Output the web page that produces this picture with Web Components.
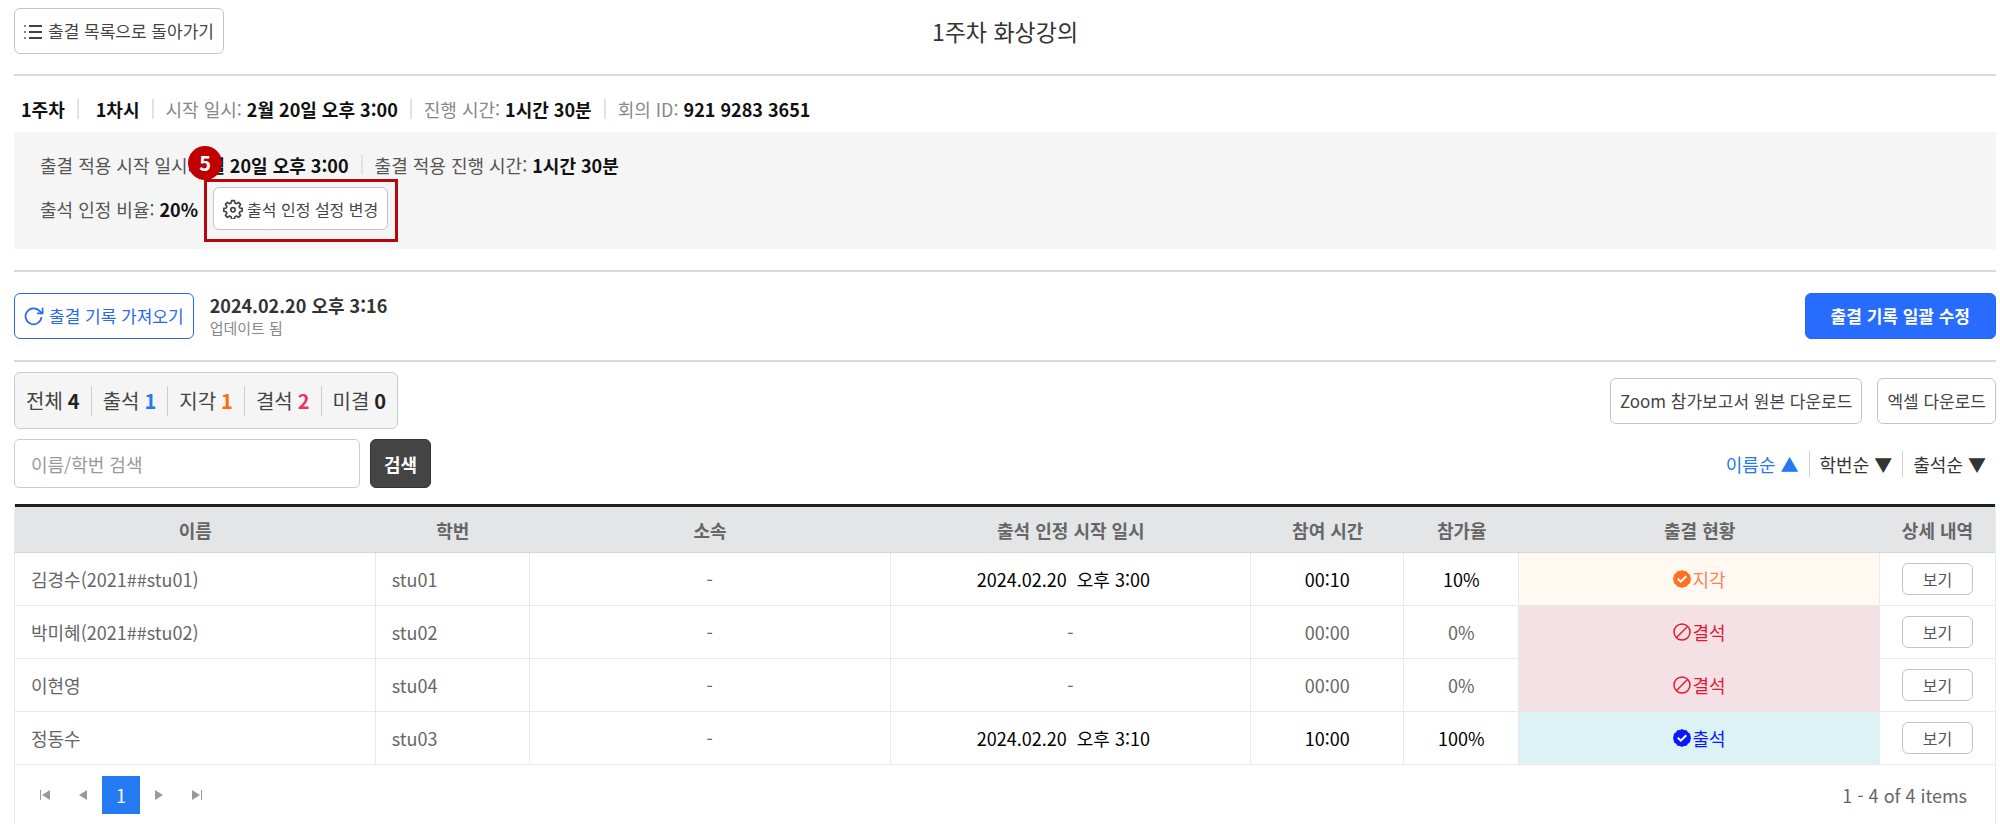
<!DOCTYPE html>
<html lang="ko">
<head>
<meta charset="utf-8">
<meta name="viewport" content="width=device-width, initial-scale=1">
<title>1주차 화상강의</title>
<style>
  body { margin: 0; background: #fff; color: #333; font-family: "Noto Sans CJK KR", sans-serif; font-size: 18px; line-height: 26px; }
</style>
</head>
<body>
<attendance-page></attendance-page>

<script>
const define = (name, html, setup) => {
  const template = document.createElement('template');
  template.innerHTML = html;
  customElements.define(name, class extends HTMLElement {
    constructor() {
      super();
      this.attachShadow({ mode: 'open' }).appendChild(template.content.cloneNode(true));
    }
    connectedCallback() { if (setup) setup(this, this.shadowRoot); }
  });
};

/* Icons, chosen by name */
const ICONS = {
  list: '<svg width="18" height="18" viewBox="0 0 18 18" fill="none" stroke="#444" stroke-width="2"><path d="M5 4h13M5 10h13M5 16h13"/><path stroke="#888" d="M0 4h2M0 10h2M0 16h2"/></svg>',
  gear: '<svg width="20" height="20" viewBox="0 0 24 24" fill="none" stroke="#444" stroke-width="2" stroke-linejoin="round"><path d="M10.3 2h3.4l.6 2.9 1.9.8 2.5-1.7 2.4 2.4-1.7 2.5.8 1.9 2.8.5v3.4l-2.8.6-.8 1.9 1.7 2.5-2.4 2.4-2.5-1.7-1.9.8-.6 2.8h-3.4l-.6-2.8-1.9-.8-2.5 1.7-2.4-2.4 1.7-2.5-.8-1.9L1 14.700V11.300l2.800-.5.8-1.9-1.700-2.500L5.300 4l2.500 1.700 1.900-.8z"/><circle cx="12" cy="13" r="2.600"/></svg>',
  refresh: '<svg width="20" height="20" viewBox="0 0 20 20" fill="none" stroke="#2a68f0" stroke-width="1.700"><path d="M17.500 11.200A8 8 0 1 1 15.700 5.200L18 7.200"/><path d="M18.600 1.800v5.600h-5.600"/></svg>',
  check: '<svg width="18" height="18" viewBox="0 0 18 18"><path fill="currentColor" d="M9 0l2 1 2.500.3L15 3.200l2 1.600.4 2.200.6 2-.6 2-.4 2.200-2 1.600-1.500 1.900L11 17l-2 1-2-1-2.500-.3L3 14.800l-2-1.600L.600 11 0 9l.6-2L1 4.800l2-1.600 1.500-1.900L7 1z"/><path fill="none" stroke="#fff" stroke-width="2" d="M4.800 8.700l3 3 5.500-5.500"/></svg>',
  ban: '<svg width="18" height="18" viewBox="0 0 18 18" fill="none" stroke="currentColor" stroke-width="1.500"><circle cx="9" cy="9" r="8"/><path d="M3.500 14.500l11-11"/></svg>',
  first: '<svg width="10" height="10" viewBox="0 0 10 10" fill="#999"><path d="M0 0h1v10H0zM10 0v10L2 5z"/></svg>',
  prev: '<svg width="8" height="10" viewBox="0 0 8 10" fill="#999"><path d="M8 0v10L0 5z"/></svg>',
  next: '<svg width="8" height="10" viewBox="0 0 8 10" fill="#999"><path d="M0 0v10l8-5z"/></svg>',
  last: '<svg width="10" height="10" viewBox="0 0 10 10" fill="#999"><path d="M9 0h1v10H9zM0 0v10l8-5z"/></svg>'
};
define('ui-icon', '<style>:host{display:inline-flex;flex:none} svg{display:block}</style><span></span>',
  (el, root) => { root.querySelector('span').innerHTML = ICONS[el.getAttribute('name')]; });

/* Button; kinds: default, outline, primary, dark, small, mini */
define('ui-button', `
<style>
  :host { display: inline-block; flex: none; }
  button { display: flex; align-items: center; justify-content: center; gap: 6px; box-sizing: border-box; width: 100%; height: 46px;
    padding: 0 9px; border: 1px solid #c4c4c4; border-radius: 6px; background: #fff; color: #444; font: inherit; font-size: 17px; line-height: 26px; white-space: nowrap; cursor: pointer; }
  :host([kind=outline]) button { border-color: #2a68f0; color: #2a68f0; gap: 5px; }
  :host([kind=primary]) button { border-color: #1f66f5; background: #286cff; color: #fff; font-weight: 700; padding: 0 25px; }
  :host([kind=dark]) button { height: 49px; padding: 0 13px; border-color: #333; background: #444; color: #fff; font-size: 18px; font-weight: 700; }
  :host([kind=small]) button { height: 43px; font-size: 16px; gap: 4px; padding: 0 9px; }
  :host([kind=mini]) button { height: 32px; font-size: 16px; padding: 0 20px; color: #555; }
</style>
<button type="button"><slot></slot></button>`);

/* "label: value" pair with a divider before every pair but the first */
define('info-item', `
<style>
  :host { display: inline-flex; align-items: center; white-space: nowrap; color: var(--label-color, #888); }
  :host(:not(:first-child))::before { content: ""; width: 2px; height: 20px; margin: 0 12px; background: #e2e2e6; }
  :host([wide])::before { margin-right: 17px; }
  .value { color: #111; font-weight: 700; }
  slot[name=label]::slotted(*) { margin-right: 5px; }
</style>
<slot name="label"></slot><span class="value"><slot></slot></span>`);

/* Numbered marker and frame laid over the control it calls out */
define('callout-mark', `
<style>
  :host { display: inline-block; position: relative; }
  .frame { position: absolute; inset: -8px -10px -12px -9px; border: 3px solid #b3090e; pointer-events: none; }
  .number { position: absolute; left: -25px; top: -41px; width: 34px; height: 34px; border-radius: 50%; background: #c00000; color: #fff; font-size: 20px; line-height: 34px; font-weight: 700; text-align: center; }
</style>
<slot></slot><span class="frame"></span><span class="number"><slot name="number"></slot></span>`);

define('count-item', `
<style>
  :host { display: inline-flex; align-items: center; gap: 5px; font-size: 20px; line-height: 30px; color: #444; white-space: nowrap; }
  :host(:not(:first-child))::before { content: ""; width: 1px; height: 30px; margin: 0 6px 0 11px; background: #ccc; }
  b { font-weight: 700; color: var(--count-color, #222); }
</style>
<slot></slot><b><slot name="count"></slot></b>`);

define('sort-option', `
<style>
  :host { display: inline-flex; align-items: center; }
  :host(:not(:first-child))::before { content: ""; width: 1px; height: 26px; margin: 0 10px; background: #ccc; }
  button { border: 0; padding: 0; background: none; font: inherit; color: #333; white-space: nowrap; cursor: pointer; }
  :host([active]) button { color: #2577f2; }
</style>
<button type="button"><slot></slot></button>`);

define('status-label', `
<style>
  :host { display: inline-flex; align-items: center; gap: 2px; vertical-align: top; color: var(--status-color); }
  ui-icon { color: var(--status-icon, currentColor); }
</style>
<ui-icon></ui-icon><span><slot></slot></span>`,
  (el, root) => {
    const icon = document.createElement('ui-icon');
    icon.setAttribute('name', el.getAttribute('icon'));
    root.querySelector('ui-icon').replaceWith(icon);
  });

define('attendance-table', `
<style>
  :host { display: block; }
  table { width: 100%; table-layout: fixed; border-collapse: separate; border-spacing: 0; border-top: 3px solid #1c211f; color: #666; }
  col.id { width: 154px; } col.time { width: 153px; } col.narrow { width: 115px; }
  th, td { box-sizing: border-box; padding: 0; text-align: center; white-space: nowrap; }
  th { height: 46px; background: #e3e5e6; border-bottom: 1px solid #d5d7d8; color: #666; font-weight: 700; }
  td { height: 53px; border-bottom: 1px solid #e9e9e9; border-right: 1px solid #e9e9e9; }
  td:last-child { border-right: 0; }
  td:nth-child(-n+2) { text-align: left; padding-left: 16px; }
  td.date { padding-right: 14px; white-space: pre; }
  .edited { color: #000; }
  .late { background: #fff9f2; --status-color: #ff8055; --status-icon: #ff7020; }
  .absent { background: #f5e1e5; --status-color: #e01a34; }
  .present { background: #dcf2f5; --status-color: #0a18ff; }
</style>
<table>
  <colgroup><col><col class="id"><col><col><col class="time"><col class="narrow"><col><col class="narrow"></colgroup>
  <thead><tr><th scope="col">이름</th><th scope="col">학번</th><th scope="col">소속</th><th scope="col">출석 인정 시작 일시</th><th scope="col">참여 시간</th><th scope="col">참가율</th><th scope="col">출결 현황</th><th scope="col">상세 내역</th></tr></thead>
  <tbody>
    <tr><td>김경수(2021##stu01)</td><td>stu01</td><td>-</td><td class="date edited">2024.02.20  오후 3:00</td><td class="edited">00:10</td><td class="edited">10%</td><td class="late"><status-label icon="check">지각</status-label></td><td><ui-button kind="mini">보기</ui-button></td></tr>
    <tr><td>박미혜(2021##stu02)</td><td>stu02</td><td>-</td><td>-</td><td>00:00</td><td>0%</td><td class="absent"><status-label icon="ban">결석</status-label></td><td><ui-button kind="mini">보기</ui-button></td></tr>
    <tr><td>이현영</td><td>stu04</td><td>-</td><td>-</td><td>00:00</td><td>0%</td><td class="absent"><status-label icon="ban">결석</status-label></td><td><ui-button kind="mini">보기</ui-button></td></tr>
    <tr><td>정동수</td><td>stu03</td><td>-</td><td class="date edited">2024.02.20  오후 3:10</td><td class="edited">10:00</td><td class="edited">100%</td><td class="present"><status-label icon="check">출석</status-label></td><td><ui-button kind="mini">보기</ui-button></td></tr>
  </tbody>
</table>`);

define('grid-pager', `
<style>
  :host { display: flex; align-items: center; justify-content: space-between; height: 59px; padding: 0 28px 0 11px; color: #666; }
  nav { display: flex; }
  button { display: flex; align-items: center; justify-content: center; width: 38px; height: 38px; padding: 0; border: 0; background: none; font: inherit; cursor: pointer; }
  button[aria-current] { background: #247af2; color: #fff; }
</style>
<nav aria-label="페이지">
  <button type="button" aria-label="처음"><ui-icon name="first"></ui-icon></button>
  <button type="button" aria-label="이전"><ui-icon name="prev"></ui-icon></button>
  <button type="button" aria-current="page">1</button>
  <button type="button" aria-label="다음"><ui-icon name="next"></ui-icon></button>
  <button type="button" aria-label="마지막"><ui-icon name="last"></ui-icon></button>
</nav>
<span>1 - 4 of 4 items</span>`);

define('attendance-page', `
<style>
  :host { display: block; padding: 8px 4px 0 14px; }
  header { display: grid; grid-template-columns: 1fr auto 1fr; align-items: center; }
  header ui-button { justify-self: start; }
  h1 { margin: 0; font-size: 23px; line-height: 34px; font-weight: 400; }
  hr { margin: 21px 0; border: 0; height: 2px; background: #d9dada; }
  header + hr { margin: 20px 0; }
  .update-row + hr { margin-bottom: 10px; }
  .row { display: flex; align-items: center; }
  .between { justify-content: space-between; }
  .session { padding: 0 7px; margin: 0 0 10px; }
  .applied { display: grid; gap: 9px; padding: 20px 26px 19px; background: #f5f5f5; --label-color: #555; }
  .ratio { gap: 15px; }
  .update { gap: 16px; }
  .update strong, .update small { display: block; }
  .update strong { font-weight: 700; color: #333; line-height: 24px; }
  .update small { font-size: 15px; line-height: 22px; color: #888; }
  .counts { display: flex; align-items: center; box-sizing: border-box; height: 57px; padding: 0 11px; border: 1px solid #ccc; border-radius: 6px; background: #f5f5f5; }
  .downloads { gap: 15px; }
  .search-row { margin-top: 10px; }
  .search { gap: 10px; }
  input { box-sizing: border-box; width: 346px; height: 49px; padding: 0 16px; border: 1px solid #ccc; border-radius: 5px; font: inherit; color: #333; }
  input::placeholder { color: #999; opacity: 1; }
  .sorts { padding-right: 10px; }
  .grid { margin-top: 16px; border: solid #e9e9e9; border-width: 0 1px; }
</style>
<header>
  <ui-button><ui-icon name="list"></ui-icon>출결 목록으로 돌아가기</ui-button>
  <h1>1주차 화상강의</h1>
</header>
<hr>
<section>
  <div class="row session">
    <info-item>1주차</info-item>
    <info-item wide>1차시</info-item>
    <info-item><span slot="label">시작 일시:</span>2월 20일 오후 3:00</info-item>
    <info-item><span slot="label">진행 시간:</span>1시간 30분</info-item>
    <info-item><span slot="label">회의 ID:</span>921 9283 3651</info-item>
  </div>
  <div class="applied">
    <div class="row">
      <info-item><span slot="label">출결 적용 시작 일시:</span>2월 20일 오후 3:00</info-item>
      <info-item><span slot="label">출결 적용 진행 시간:</span>1시간 30분</info-item>
    </div>
    <div class="row ratio">
      <info-item><span slot="label">출석 인정 비율:</span>20%</info-item>
      <callout-mark><ui-button kind="small"><ui-icon name="gear"></ui-icon>출석 인정 설정 변경</ui-button><span slot="number">5</span></callout-mark>
    </div>
  </div>
</section>
<hr>
<div class="row between update-row">
  <div class="row update">
    <ui-button kind="outline"><ui-icon name="refresh"></ui-icon>출결 기록 가져오기</ui-button>
    <div><strong>2024.02.20 오후 3:16</strong><small>업데이트 됨</small></div>
  </div>
  <ui-button kind="primary">출결 기록 일괄 수정</ui-button>
</div>
<hr>
<div class="row between">
  <div class="counts">
    <count-item>전체<span slot="count">4</span></count-item>
    <count-item style="--count-color:#2577f2">출석<span slot="count">1</span></count-item>
    <count-item style="--count-color:#fd6a10">지각<span slot="count">1</span></count-item>
    <count-item style="--count-color:#ea3368">결석<span slot="count">2</span></count-item>
    <count-item>미결<span slot="count">0</span></count-item>
  </div>
  <div class="row downloads">
    <ui-button>Zoom 참가보고서 원본 다운로드</ui-button>
    <ui-button>엑셀 다운로드</ui-button>
  </div>
</div>
<div class="row between search-row">
  <div class="row search">
    <input type="text" aria-label="이름/학번 검색" placeholder="이름/학번 검색">
    <ui-button kind="dark">검색</ui-button>
  </div>
  <div class="row sorts">
    <sort-option active>이름순 ▲</sort-option>
    <sort-option>학번순 ▼</sort-option>
    <sort-option>출석순 ▼</sort-option>
  </div>
</div>
<section class="grid">
  <attendance-table></attendance-table>
  <grid-pager></grid-pager>
</section>`);
</script>
</body>
</html>
